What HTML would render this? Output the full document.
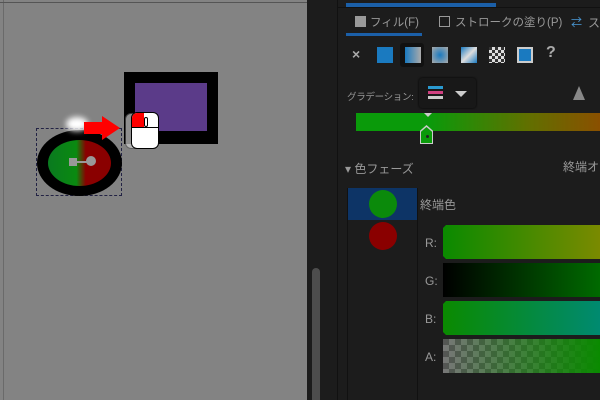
<!DOCTYPE html><html><head><meta charset="utf-8"><style>
body{margin:0;width:600px;height:400px;overflow:hidden;background:#1c1c1c;position:relative;font-family:"Liberation Sans","Noto Sans CJK JP",sans-serif;font-size:12px;color:#999}
.a{position:absolute}
</style></head><body>
<div class="a" style="left:0;top:0;width:307px;height:400px;background:#838383"></div>
<div class="a" style="left:3px;top:0;width:1px;height:400px;background:#6a6a6a"></div>
<div class="a" style="left:0;top:2px;width:307px;height:1px;background:#555"></div>
<div class="a" style="left:312px;top:268px;width:8px;height:132px;background:#4d4d4d;border-radius:4px 4px 0 0"></div>
<div class="a" style="left:337px;top:0;width:1px;height:400px;background:#111"></div>
<div class="a" style="left:346px;top:3px;width:150px;height:4px;background:#1b5fa8"></div>
<div class="a" style="left:338px;top:7px;width:262px;height:1px;background:#111"></div>
<!-- tabs -->
<div class="a" style="left:355px;top:16px;width:11px;height:11px;background:#999"></div>
<div class="a" style="left:370px;top:14px;color:#999;font-size:11.5px">フィル(F)</div>
<div class="a" style="left:346px;top:33px;width:76px;height:3px;background:#1b5fa8"></div>
<div class="a" style="left:439px;top:16px;width:9px;height:9px;border:1px solid #999"></div>
<div class="a" style="left:455px;top:14px;color:#999;font-size:11.5px">ストロークの塗り(P)</div>
<div class="a" style="left:571px;top:14px;color:#4a9ad8;font-size:11px">⇄</div>
<div class="a" style="left:588px;top:14px;color:#999">ス</div>
<!-- fill icons -->
<div class="a" style="left:352px;top:46px;color:#aaa;font-size:14px;font-weight:bold">×</div>
<div class="a" style="left:377px;top:47px;width:16px;height:16px;background:#1a7ac0"></div>
<div class="a" style="left:400px;top:43px;width:24px;height:24px;background:#111;border-radius:3px"></div>
<div class="a" style="left:405px;top:47px;width:16px;height:16px;background:linear-gradient(90deg,#1a7ac0,#aaa)"></div>
<div class="a" style="left:432px;top:47px;width:16px;height:16px;background:radial-gradient(#1a7ac0,#aaa)"></div>
<div class="a" style="left:461px;top:47px;width:16px;height:16px;background:linear-gradient(135deg,#1a7ac0,#ddd,#1a7ac0)"></div>
<div class="a" style="left:489px;top:47px;width:16px;height:16px;background:repeating-conic-gradient(#ddd 0 25%,#333 0 50%) 0 0/6px 6px"></div>
<div class="a" style="left:517px;top:47px;width:12px;height:12px;border:2px solid #ccc;background:#1a7ac0"></div>
<div class="a" style="left:546px;top:44px;color:#aaa;font-size:16px;font-weight:bold">?</div>
<!-- gradient row -->
<div class="a" style="left:347px;top:89px;color:#999;font-size:9.5px;letter-spacing:-0.3px">グラデーション:</div>
<div class="a" style="left:419px;top:78px;width:57px;height:30px;background:#181818;border-radius:3px;box-shadow:0 0 2px #000"></div>
<div class="a" style="left:428px;top:86px;width:15px;height:3px;background:#2a9ad0"></div>
<div class="a" style="left:428px;top:91px;width:15px;height:3px;background:#d04080"></div>
<div class="a" style="left:428px;top:96px;width:15px;height:3px;background:#ccc"></div>
<div class="a" style="left:455px;top:91px;width:0;height:0;border-left:6px solid transparent;border-right:6px solid transparent;border-top:6px solid #ccc"></div>
<div class="a" style="left:573px;top:86px;width:0;height:0;border-left:6px solid transparent;border-right:6px solid transparent;border-bottom:14px solid #888"></div>
<div class="a" style="left:356px;top:113px;width:244px;height:18px;background:linear-gradient(90deg,#0a9a0a 0%,#0a9a0a 30%,#607000 70%,#8a5000 100%)"></div>
<div class="a" style="left:424px;top:113px;width:0;height:0;border-left:4px solid transparent;border-right:4px solid transparent;border-top:4px solid #ccc"></div>
<div class="a" style="left:420px;top:125px;width:13px;height:19px;background:#ccc;clip-path:polygon(50% 0,100% 30%,100% 100%,0 100%,0 30%)"></div>
<div class="a" style="left:421px;top:127px;width:11px;height:16px;background:#0a9a0a;clip-path:polygon(50% 0,100% 30%,100% 100%,0 100%,0 30%)"></div>
<div class="a" style="left:426px;top:135px;width:3px;height:3px;background:#222;border-radius:2px"></div>
<!-- color phase -->
<div class="a" style="left:345px;top:160px;color:#999;font-size:12px">▾ 色フェーズ</div>
<div class="a" style="left:563px;top:158px;color:#999">終端オ</div>
<div class="a" style="left:347px;top:188px;width:1px;height:212px;background:#111"></div>
<div class="a" style="left:417px;top:188px;width:1px;height:212px;background:#111"></div>
<div class="a" style="left:348px;top:188px;width:69px;height:32px;background:#0d3466"></div>
<div class="a" style="left:369px;top:190px;width:28px;height:28px;border-radius:50%;background:#0b8a0b"></div>
<div class="a" style="left:369px;top:222px;width:28px;height:28px;border-radius:50%;background:#8a0000"></div>
<div class="a" style="left:420px;top:196px;color:#999">終端色</div>
<div class="a" style="left:425px;top:236px;color:#999">R:</div>
<div class="a" style="left:425px;top:274px;color:#999">G:</div>
<div class="a" style="left:425px;top:312px;color:#999">B:</div>
<div class="a" style="left:425px;top:350px;color:#999">A:</div>
<div class="a" style="left:443px;top:225px;width:157px;height:34px;background:linear-gradient(90deg,#0a8a00,#7a8a00);clip-path:polygon(3px 0,100% 0,100% 100%,3px 100%,0 calc(100% - 3px),0 3px)"></div>
<div class="a" style="left:443px;top:263px;width:157px;height:34px;background:linear-gradient(90deg,#000,#006a00)"></div>
<div class="a" style="left:443px;top:301px;width:157px;height:34px;background:linear-gradient(90deg,#0a8a00,#008a70);clip-path:polygon(3px 0,100% 0,100% 100%,3px 100%,0 calc(100% - 3px),0 3px)"></div>
<div class="a" style="left:443px;top:339px;width:157px;height:34px;background:linear-gradient(90deg,rgba(10,138,0,0),#0a8a00),repeating-conic-gradient(#777 0 25%,#555 0 50%) 0 0/12px 12px"></div>
<!-- canvas drawings -->
<div class="a" style="left:124px;top:72px;width:94px;height:72px;background:#000"></div>
<div class="a" style="left:135px;top:83px;width:72px;height:48px;background:#5b3b89"></div>
<div class="a" style="left:36px;top:128px;width:86px;height:68px;border:1px dashed #224;box-sizing:border-box"></div>
<div class="a" style="left:37px;top:130px;width:85px;height:66px;border-radius:50%;background:#000"></div>
<div class="a" style="left:48px;top:140px;width:63px;height:46px;border-radius:50%;background:linear-gradient(90deg,#0a7a20 0%,#0a8a10 45%,#8a0000 60%,#8a0000 100%)"></div>
<div class="a" style="left:69px;top:158px;width:8px;height:8px;background:#999"></div>
<div class="a" style="left:76px;top:161px;width:12px;height:2px;background:#999"></div>
<div class="a" style="left:86px;top:156px;width:10px;height:10px;border-radius:50%;background:#999"></div>
<div class="a" style="left:66px;top:117px;width:22px;height:14px;border-radius:50%;background:#fff;filter:blur(3px)"></div>
<svg class="a" style="left:82px;top:114px" width="42" height="28"><polygon points="2,8 20,8 20,2 38,14 20,26 20,20 2,20" fill="#f00"/></svg>
<div class="a" style="left:125px;top:113px;width:26px;height:34px;border-radius:6px;background:#ccc;border:1px solid #555;opacity:.7"></div>
<div class="a" style="left:131px;top:112px;width:26px;height:35px;border-radius:6px;background:#fff;border:1px solid #000;overflow:hidden">
<div style="position:absolute;left:0;top:0;width:12px;height:14px;background:#f00"></div>
<div style="position:absolute;left:0;top:14px;width:26px;height:1px;background:#000"></div>
<div style="position:absolute;left:12px;top:4px;width:2px;height:8px;border:1px solid #000;border-radius:2px"></div></div>
</body></html>
